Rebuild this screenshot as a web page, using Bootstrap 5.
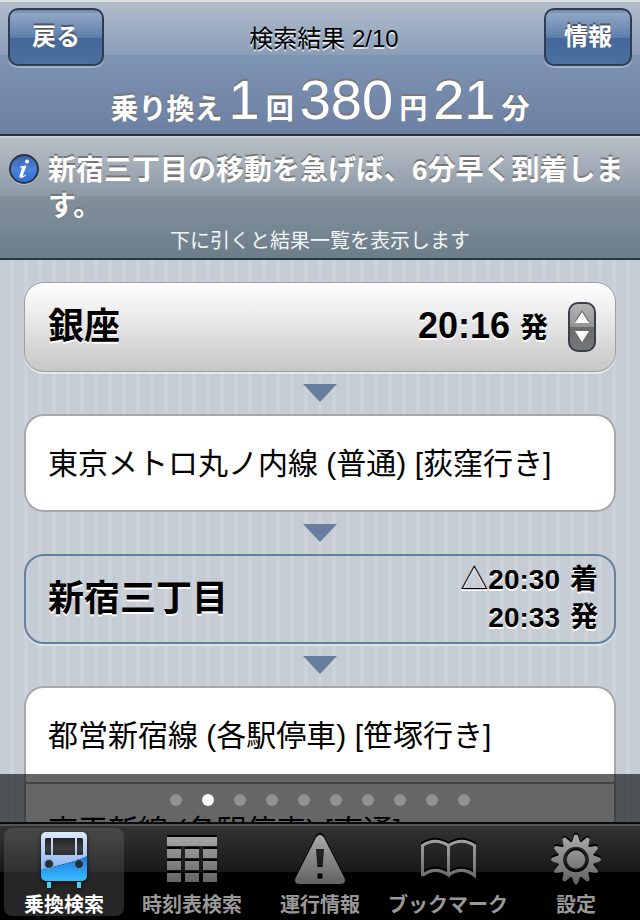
<!DOCTYPE html>
<html lang="ja">
<head>
<meta charset="utf-8">
<meta name="viewport" content="width=device-width, initial-scale=1">
<title>検索結果</title>
<link href="https://cdn.jsdelivr.net/npm/bootstrap@5.3.0/dist/css/bootstrap.min.css" rel="stylesheet">
<style>
body{font-family:"Liberation Sans","Noto Sans CJK JP",sans-serif;color:#000;background:#c5ccd4}
button{font-family:inherit}
.topbar{padding-top:8px;border-bottom:2px solid #2c303c;background:linear-gradient(#dcdfe2 0 2px,#b2bdcc 2px,#8b9db8 55px,#7e94b3 55px,#6c80a3 100%)}
.nav-row{padding:0 8px}
.nav-btn{height:58px;border:2px solid #2f3d52;border-radius:10px;color:#fff;font-size:24px;font-weight:700;line-height:30px;padding:0;text-shadow:0 -2px 0 #4d5566;
background:linear-gradient(#6d84a6 0,#8fa6c4 4px,#5c7dab 28px,#45679a 28px,#4b70a2 100%);box-shadow:0 2px 0 rgba(255,255,255,.3)}
.back-btn{width:96px}.info-btn{width:88px}
.page-title{font-size:24px;line-height:28px;padding-top:4px;text-shadow:0 2px 0 rgba(255,255,255,.75)}
.summary{height:68px;gap:6px;color:#fff;text-shadow:0 -2px 0 #777}
.summary span{font-size:28px;font-weight:700;line-height:68px}
.summary strong{font-size:56px;font-weight:400;line-height:68px}
.notice{color:#fff;padding:17px 8px 3px;border-bottom:2px solid #2b3640;background:linear-gradient(#cfd1da 0 2px,#b8bfc6 2px,#8c99a6 60px,#82909c 60px,#6c7e8a 100%)}
.notice-icon{width:32px;height:32px}
.notice-text{font-size:28px;font-weight:700;line-height:36px;text-shadow:0 -2px 0 #777}
.notice-hint{font-size:20px;line-height:28px;padding-top:2px;color:#f2f5f7}
.route{background:repeating-linear-gradient(90deg,#c5ccd4 0 10px,#cbd2d9 10px 14px);padding:22px 24px 0;min-height:0}
.stop{min-height:90px;border-radius:20px;text-shadow:0 2px 0 #fff}
.stop-start{border:1px solid #a0a0a3;padding:0 19px 0 23px;background:linear-gradient(#fff,#e4e4e4 50%,#c6c6c6);box-shadow:0 2px 0 rgba(255,255,255,.5)}
.stop-change{border:2px solid #667e9f;padding:0 16px 0 22px;box-shadow:0 2px 0 rgba(255,255,255,.4)}
.stop-name{font-size:36px;font-weight:700;line-height:44px}
.stop-time{font-size:36px;line-height:44px;font-weight:700}
.unit,.times{font-size:28px;font-weight:700}
.times{line-height:38px}
.times span{margin-left:10px}
.times i{font-weight:400;font-style:normal}
.stepper{width:28px;height:50px;border:2px solid #3a3f4a;border-radius:10px;margin-left:20px;background:linear-gradient(#b5b5b5,#939393 50%,#6b6b6b 50%,#777)}
.link-arrow{height:42px}
.line-box{border:2px solid #a8a9ad;border-radius:20px;background:#fff}
.line-row{font-size:30px;line-height:36px;min-height:94px;padding:2px 22px 0}
.line-row+.line-row{border-top:2px solid #a8a9ad}
.line-row,.stop-name,.stop-time{white-space:nowrap}
.pager{height:48px;padding-top:4px;gap:20px;background:rgba(0,0,0,.6)}
.pager button{width:12px;height:12px;border-radius:50%;background:#929292}
.pager .current{background:#fff}
.tabs{padding:4px 0;border-top:2px solid #0c0c0c;background:linear-gradient(#555 0 2px,#333 2px,#181818 48px,#000 48px)}
.tab-link{flex:1 1 0;min-width:0;margin:0 4px;border-radius:8px;padding:2px 0 0;color:#999;font-size:20px;font-weight:700;line-height:22px;white-space:nowrap}
.tab-link:hover{color:#ccc}
.tab-link svg{width:60px;height:60px;margin-bottom:4px;filter:drop-shadow(0 -2px 0 #000)}
.tab-link.active{color:#fff;background:linear-gradient(#484848,#303030 44px,#262626 44px)}
.tab-link.active svg{filter:drop-shadow(0 2px 2px #111)}
</style>
<script src="https://cdn.jsdelivr.net/npm/bootstrap@5.3.0/dist/js/bootstrap.bundle.min.js"></script>
</head>
<body class="d-flex flex-column vh-100 overflow-hidden">
<header class="topbar flex-shrink-0">
  <div class="nav-row d-flex align-items-center">
    <button type="button" class="nav-btn back-btn">戻る</button>
    <h1 class="page-title flex-fill text-center fw-normal mb-0">検索結果 2/10</h1>
    <button type="button" class="nav-btn info-btn">情報</button>
  </div>
  <div class="summary d-flex justify-content-center align-items-baseline">
    <span>乗り換え</span><strong>1</strong><span>回</span><strong>380</strong><span>円</span><strong>21</strong><span>分</span>
  </div>
</header>
<section class="notice flex-shrink-0">
  <div class="d-flex gap-2">
    <svg class="notice-icon flex-shrink-0" viewBox="0 0 32 32" aria-hidden="true">
      <defs><linearGradient id="infoBlue" x2="0" y2="1"><stop stop-color="#3a5ea8"/><stop offset=".5" stop-color="#4c83da"/><stop offset="1" stop-color="#2f6dd5"/></linearGradient></defs>
      <circle cx="16" cy="17" r="15" fill="#c3ccd3"/><circle cx="16" cy="16" r="14" fill="url(#infoBlue)" stroke="#2c3446" stroke-width="2"/>
      <circle cx="19" cy="8.500" r="2" fill="#fff"/><path d="M12.500 13.500l6-1-3.500 9.500q-.3 1.300 1 .6l1.500-1.100.4.700q-2.700 3-5 2.700-2-.4-1.200-2.900l2.300-7.200-1.800-.3z" fill="#fff"/>
    </svg>
    <div class="notice-text">新宿三丁目の移動を急げば、6分早く到着します。</div>
  </div>
  <div class="notice-hint text-center">下に引くと結果一覧を表示します</div>
</section>
<main class="route flex-fill position-relative overflow-hidden">
  <div class="stop stop-start d-flex align-items-center">
    <div class="stop-name flex-fill">銀座</div>
    <div class="stop-time">20:16 <span class="unit">発</span></div>
    <button type="button" class="stepper d-flex align-items-center justify-content-center p-0" aria-label="出発時刻を変更">
      <svg width="16" height="32" viewBox="0 0 16 32"><path d="M1 10L8 -1l7 11z" fill="#666"/><path d="M1 12L8 1l7 11zM1 20h14L8 31z" fill="#fff"/></svg>
    </button>
  </div>
  <div class="link-arrow d-flex align-items-center justify-content-center"><svg width="34" height="18" viewBox="0 0 34 18"><path d="M0 0h34L17 18z" fill="#677e9f"/></svg></div>
  <div class="line-box">
    <div class="line-row d-flex align-items-center">東京メトロ丸ノ内線 (普通) [荻窪行き]</div>
  </div>
  <div class="link-arrow d-flex align-items-center justify-content-center"><svg width="34" height="18" viewBox="0 0 34 18"><path d="M0 0h34L17 18z" fill="#677e9f"/></svg></div>
  <div class="stop stop-change d-flex align-items-center">
    <div class="stop-name flex-fill">新宿三丁目</div>
    <div class="times text-end">
      <div><i>△</i>20:30<span>着</span></div>
      <div>20:33<span>発</span></div>
    </div>
  </div>
  <div class="link-arrow d-flex align-items-center justify-content-center"><svg width="34" height="18" viewBox="0 0 34 18"><path d="M0 0h34L17 18z" fill="#677e9f"/></svg></div>
  <div class="line-box">
    <div class="line-row d-flex align-items-center">都営新宿線 (各駅停車) [笹塚行き]</div>
    <div class="line-row d-flex align-items-center">京王新線 (各駅停車) [直通]</div>
  </div>
  <div class="pager position-absolute bottom-0 start-0 end-0 d-flex align-items-center justify-content-center">
    <button class="border-0 p-0" aria-label="1"></button><button class="border-0 p-0 current" aria-label="2"></button><button class="border-0 p-0" aria-label="3"></button><button class="border-0 p-0" aria-label="4"></button><button class="border-0 p-0" aria-label="5"></button><button class="border-0 p-0" aria-label="6"></button><button class="border-0 p-0" aria-label="7"></button><button class="border-0 p-0" aria-label="8"></button><button class="border-0 p-0" aria-label="9"></button><button class="border-0 p-0" aria-label="10"></button>
  </div>
</main>
<nav class="tabs d-flex flex-shrink-0">
  <a href="#" class="tab-link active d-flex flex-column align-items-center text-decoration-none" aria-current="page">
    <svg viewBox="0 0 60 60" aria-hidden="true">
      <defs>
        <linearGradient id="trainTop" x2="0" y2="1"><stop stop-color="#dbe9fd"/><stop offset="1" stop-color="#8db4ea"/></linearGradient>
        <linearGradient id="trainLow" x2="0" y2="1"><stop stop-color="#1a78e8"/><stop offset="1" stop-color="#38bdfb"/></linearGradient>
        <linearGradient id="trainGlass" x2="0" y2="1"><stop stop-color="#222"/><stop offset=".6" stop-color="#3c3c3c"/><stop offset="1" stop-color="#2c2c2c"/></linearGradient>
        <clipPath id="trainBody"><rect x="7" y="2" width="46" height="49" rx="5"/></clipPath>
      </defs>
      <g clip-path="url(#trainBody)"><path d="M7 2h46v26L7 40z" fill="url(#trainTop)"/><path d="M7 39Q30 36 53 26v25H7z" fill="url(#trainLow)"/></g>
      <path d="M12 8h5v17h-5l-1-1V9zM19 8h22v17H19zM43 8h5l1 1v15l-1 1h-5z" fill="url(#trainGlass)"/>
      <circle cx="15" cy="34" r="4.500" fill="#2b2f33" stroke="#72aeea"/><circle cx="45" cy="34" r="4.500" fill="#2b2f33" stroke="#4796ea"/>
      <path d="M13 52h4v6h-4zM43 52h4v6h-4z" fill="#45d0fa"/>
    </svg>乗換検索</a>
  <a href="#" class="tab-link d-flex flex-column align-items-center text-decoration-none">
    <svg viewBox="0 0 60 60" aria-hidden="true">
      <defs><linearGradient id="steel" gradientUnits="userSpaceOnUse" x1="0" y1="5" x2="0" y2="55"><stop stop-color="#aaa"/><stop offset="1" stop-color="#606060"/></linearGradient></defs>
      <path fill="url(#steel)" d="M5 7h50v9H5zM5 19h14v9H5zM23 19h14v9H23zM41 19h14v9H41zM5 31h14v9H5zM23 31h14v9H23zM41 31h14v9H41zM5 43h14v9H5zM23 43h14v9H23zM41 43h14v9H41z"/>
    </svg>時刻表検索</a>
  <a href="#" class="tab-link d-flex flex-column align-items-center text-decoration-none">
    <svg viewBox="0 0 60 60" aria-hidden="true">
      <path fill="url(#steel)" fill-rule="evenodd" d="M26 7.500Q30 2 34 7.500L54.500 48Q56.500 54 50 54H10Q3.500 54 5.500 48zM26 19l1.500 18h5L34 19zM27.500 43.500v5h5v-5z"/>
    </svg>運行情報</a>
  <a href="#" class="tab-link d-flex flex-column align-items-center text-decoration-none">
    <svg viewBox="0 0 60 60" aria-hidden="true">
      <path fill="none" stroke="url(#steel)" stroke-width="3" d="M4.500 46V15.500Q17 7 30.500 15.500V45Q17 35.500 4.500 45.500M30.500 15.500Q44 7 56.500 15.500V45.500Q44 35.500 30.500 45"/>
    </svg>ブックマーク</a>
  <a href="#" class="tab-link d-flex flex-column align-items-center text-decoration-none">
    <svg viewBox="0 0 60 60" aria-hidden="true">
      <defs>
        <path id="cog" d="M25.500 13L28.200 5.500Q30 3.500 31.800 5.500L34.500 13z"/>
        <mask id="gearShape"><g fill="#fff"><circle cx="30" cy="29.500" r="18"/>
          <use href="#cog"/><use href="#cog" transform="rotate(30 30 29.500)"/><use href="#cog" transform="rotate(60 30 29.500)"/><use href="#cog" transform="rotate(90 30 29.500)"/><use href="#cog" transform="rotate(120 30 29.500)"/><use href="#cog" transform="rotate(150 30 29.500)"/><use href="#cog" transform="rotate(180 30 29.500)"/><use href="#cog" transform="rotate(210 30 29.500)"/><use href="#cog" transform="rotate(240 30 29.500)"/><use href="#cog" transform="rotate(270 30 29.500)"/><use href="#cog" transform="rotate(300 30 29.500)"/><use href="#cog" transform="rotate(330 30 29.500)"/></g>
          <circle cx="30" cy="29.500" r="11" fill="none" stroke="#000" stroke-width="3.500"/></mask>
      </defs>
      <rect width="60" height="60" fill="url(#steel)" mask="url(#gearShape)"/>
    </svg>設定</a>
</nav>
</body>
</html>
